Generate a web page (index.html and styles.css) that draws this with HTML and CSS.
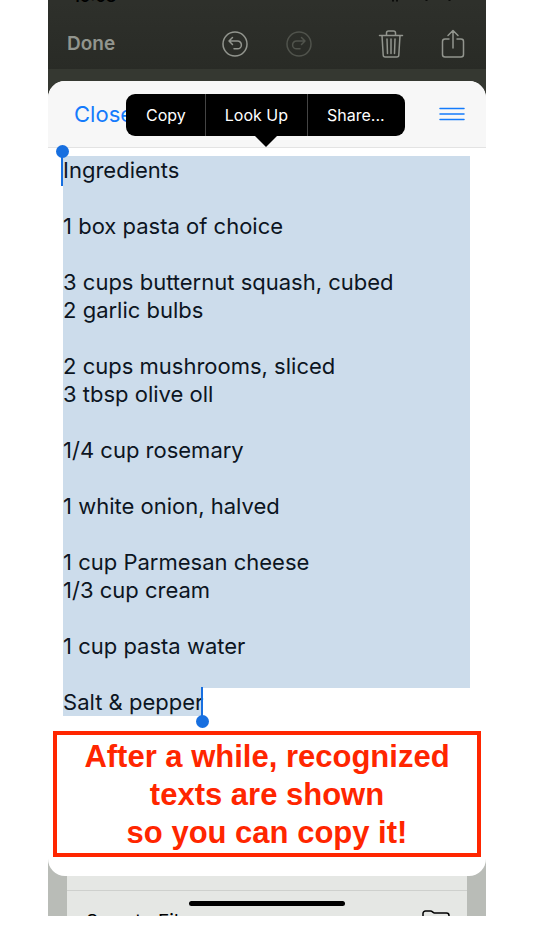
FILE: index.html
```html
<!DOCTYPE html>
<html lang="en">
<head>
    <meta charset="UTF-8">
    <meta name="viewport" content="width=device-width, initial-scale=1.0">
    <title>Recognized Text</title>
    <link rel="stylesheet" href="styles.css">
</head>
<body>
    <main class="phone">
        <div class="status-bar">
            <span>10:08</span>
            <svg width="62" height="2" viewBox="0 0 62 2">
                <path d="M1 0v1M5 0v1M34 0h1M57 0h1"/>
            </svg>
        </div>
        <header class="toolbar">
            <button class="done">Done</button>
            <button class="icon-button" aria-label="Undo">
                <svg width="26" height="26" viewBox="0 0 26 26">
                    <circle cx="13" cy="13" r="12"/>
                    <path d="M10.5 6.500 7 10l3.500 3.500M7 10h8.500a3.800 3.800 0 0 1 0 7.800H12"/>
                </svg>
            </button>
            <button class="icon-button redo" aria-label="Redo" disabled>
                <svg width="26" height="26" viewBox="0 0 26 26">
                    <circle cx="13" cy="13" r="12"/>
                    <path d="M15.500 6.500 19 10l-3.500 3.500M19 10h-8.500a3.800 3.800 0 0 0 0 7.800H14"/>
                </svg>
            </button>
            <button class="icon-button trash" aria-label="Delete">
                <svg width="26" height="30" viewBox="0 0 26 30">
                    <path d="M1.500 6.500h23M8.500 6.500V4a2 2 0 0 1 2-2h5a2 2 0 0 1 2 2v2.500M4 6.500l1.200 19.500a2 2 0 0 0 2 2h11.600a2 2 0 0 0 2-2L22 6.500M9 10l.5 14.500M13 10v14.500M17 10l-.5 14.500"/>
                </svg>
            </button>
            <button class="icon-button share" aria-label="Share">
                <svg width="24" height="30" viewBox="0 0 24 30">
                    <path d="M8 10H4a2.500 2.500 0 0 0-2.500 2.500v13A2.500 2.500 0 0 0 4 28h16a2.500 2.500 0 0 0 2.500-2.500v-13A2.500 2.500 0 0 0 20 10h-4M12 19V2M7 6.500 12 1.500l5 5"/>
                </svg>
            </button>
        </header>

        <section class="sheet">
            <div class="sheet-header">
                <button class="close">Close</button>
                <button class="menu" aria-label="Menu">
                    <svg width="26" height="14" viewBox="0 0 26 14">
                        <path d="M1 1.500h24M1 7h24M1 12.500h24"/>
                    </svg>
                </button>
                <div class="popup">
                    <button>Copy</button>
                    <button>Look Up</button>
                    <button>Share...</button>
                </div>
            </div>

            <div class="text">
                <span class="handle handle-start"></span>
                <div class="selected">Ingredients

1 box pasta of choice

3 cups butternut squash, cubed
2 garlic bulbs

2 cups mushrooms, sliced
3 tbsp olive oll

1/4 cup rosemary

1 white onion, halved

1 cup Parmesan cheese
1/3 cup cream

1 cup pasta water
<br></div>
                <div class="selected last-line">Salt &amp; pepper<span class="handle handle-end"></span></div>
            </div>

            <p class="note">After a while, recognized<br>texts are shown<br>so you can copy it!</p>
        </section>

        <footer class="actions">
            <div class="action-row">
                <span>Save to Files</span>
                <svg width="28" height="24" viewBox="0 0 28 24">
                    <path d="M1 23V3.500A2.500 2.500 0 0 1 3.500 1h5c2 0 2.500 2 4 2h12A2.500 2.500 0 0 1 27 5.500V23z"/>
                </svg>
            </div>
            <div class="home-bar"></div>
        </footer>
    </main>
</body>
</html>
```

FILE: styles.css
```css
* {
    box-sizing: border-box;
}
body {
    margin: 0;
    padding: 0 9%;
    background: #fff;
    font-family: Inter, "Liberation Sans", sans-serif;
}
button {
    margin: 0;
    padding: 0;
    border: 0;
    background: none;
    color: inherit;
    font-family: inherit;
}
svg {
    display: block;
    fill: none;
    stroke: currentColor;
    stroke-width: 1.5;
    stroke-linecap: round;
    stroke-linejoin: round;
}
.phone {
    background: linear-gradient(#353831 50%, #b9bcb7 50%);
    overflow: hidden;
}

/* top bars */
.status-bar {
    display: flex;
    align-items: flex-end;
    justify-content: space-between;
    height: 2px;
    padding: 0 32px 0 25px;
    overflow: hidden;
    background: #2e302b;
    font-size: 16px;
    font-weight: 600;
    line-height: 12px;
}
.toolbar {
    display: flex;
    align-items: center;
    height: 67px;
    margin-bottom: 12px;
    padding: 16px 21px 0 19px;
    background: linear-gradient(#2e302b, #292b26);
    color: #92958e;
}
.done {
    margin-right: auto;
    font-size: 19px;
    font-weight: 600;
}
.redo {
    margin-left: 38px;
    color: #50534c;
}
.trash {
    margin-left: 66px;
}
.share {
    margin-left: 37px;
}

/* sheet */
.sheet {
    padding-bottom: 19px;
    border-radius: 17px;
    background: #fff;
}
.sheet-header {
    position: relative;
    display: flex;
    align-items: center;
    justify-content: space-between;
    height: 67px;
    padding: 0 21px 0 26px;
    border-bottom: 1px solid #e3e3e3;
    border-radius: 17px 17px 0 0;
    background: #f7f7f7;
    color: #147bfc;
}
.close {
    font-size: 22px;
}
.popup {
    position: absolute;
    top: 13px;
    left: 78px;
    display: flex;
    height: 42px;
    padding: 0 1px;
    border-radius: 9px;
    background: #000;
    color: #fff;
}
.popup::after {
    content: "";
    position: absolute;
    top: 100%;
    left: 50%;
    margin-left: -10px;
    border: 11px solid transparent;
    border-top-color: #000;
    border-bottom: 0;
}
.popup button {
    padding: 0 19px;
    font-size: 16px;
}
.popup button + button {
    border-left: 1px solid #444;
}

/* recognized text */
.text {
    position: relative;
    padding: 8px 16px 0 15px;
    color: #0c1522;
    font-size: 22px;
    line-height: 28px;
}
.selected {
    background: #ccdceb;
    white-space: pre-line;
}
.last-line {
    position: relative;
    width: fit-content;
}
.handle {
    position: absolute;
    width: 2px;
    height: 35px;
    background: #176fe0;
}
.handle::after {
    content: "";
    position: absolute;
    left: -5px;
    width: 13px;
    height: 13px;
    border-radius: 50%;
    background: #176fe0;
}
.handle-start {
    top: 3px;
    left: 13px;
}
.handle-start::after {
    top: -6px;
}
.handle-end {
    top: -1px;
    right: 0;
}
.handle-end::after {
    bottom: -6px;
}
.note {
    margin: 15px 5px 0;
    padding: 3px 0 1px;
    border: 4px solid #ff2600;
    color: #ff2600;
    font-family: "Liberation Sans", sans-serif;
    font-size: 31px;
    font-weight: bold;
    line-height: 38px;
    text-align: center;
}

/* page behind the sheet */
.actions {
    position: relative;
    height: 40px;
    margin: 0 19px;
    padding-top: 14px;
    overflow: hidden;
    background: #e5e7e4;
}
.action-row {
    display: flex;
    justify-content: space-between;
    padding: 19px 17px 0 19px;
    border-top: 1px solid #ced0cd;
    color: #000;
    font-size: 19px;
    line-height: 24px;
}
.home-bar {
    position: absolute;
    top: 25px;
    left: 50%;
    width: 156px;
    height: 5px;
    margin-left: -78px;
    border-radius: 3px;
    background: #000;
}
```
